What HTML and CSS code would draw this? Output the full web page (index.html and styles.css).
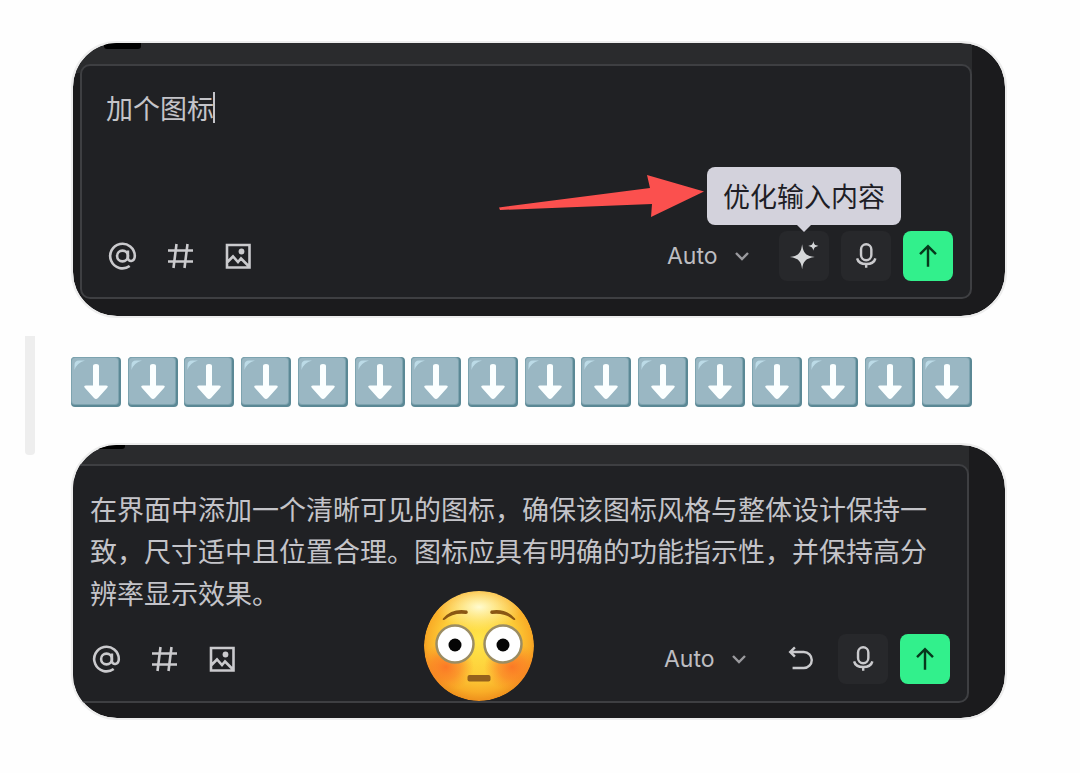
FILE: index.html
```html
<!DOCTYPE html>
<html lang="zh-CN">

<head>
  <meta charset="UTF-8">
  <meta name="viewport" content="width=device-width, initial-scale=1.0">
  <title>优化输入内容</title>
  <link rel="stylesheet" href="styles.css">
</head>

<body>
  <!-- 图标 -->
  <svg class="sprite" aria-hidden="true">
    <symbol id="icon-at" viewBox="0 0 32 32">
      <circle cx="16.500" cy="16" r="5.400" />
      <path d="M21.900 10.400v7.400c0 4.600 6.900 4.400 6.900-1.800A12.300 12.300 0 1 0 23.700 26" />
    </symbol>
    <symbol id="icon-hash" viewBox="0 0 32 32">
      <path d="M12.500 4L9.500 28M23.500 4L20.500 28M4 10.500H29M4 21.500H29" />
    </symbol>
    <symbol id="icon-image" viewBox="0 0 32 32">
      <path d="M5 5H27.500V27.500H5zM5 22.500L11 16.500L16 22L19 18.500L27 26.500" />
      <circle class="dot" cx="19.500" cy="11.500" r="2.900" />
    </symbol>
    <symbol id="icon-chevron" viewBox="0 0 14 14">
      <path d="M1 4L7 10L13 4" />
    </symbol>
    <symbol id="icon-mic" viewBox="0 0 32 32">
      <rect x="10.700" y="3.500" width="11" height="17" rx="5.500" />
      <path d="M6.500 18.500C8.500 26.500 24 26.500 26 18.500M16.200 24.500V28.500" />
    </symbol>
    <symbol id="icon-send" viewBox="0 0 32 32">
      <path d="M16 27.500V5.500M7.500 14L16 5.500L24.500 14" />
    </symbol>
    <symbol id="icon-undo" viewBox="0 0 32 32">
      <path d="M9.500 3.500L4.500 8.500L9.500 13.500M4.500 8.500H19A8.500 8.500 0 0 1 19 25.500H7" />
    </symbol>
    <symbol id="icon-sparkle" viewBox="0 0 32 32">
      <path d="M14 3.500C15.200 12.500 17.500 16 27.500 17C17.500 18.500 15.200 21.500 14 30C12.800 21.500 10.500 18.500 1 17C10.500 16 12.800 12.500 14 3.500Z" />
      <path d="M26 0C26.500 3.500 27.500 4.500 31.500 5.200C27.500 6 26.500 7 26 10.500C25.500 7 24.500 6 20.500 5.200C24.500 4.500 25.500 3.500 26 0Z" />
    </symbol>
    <symbol id="emoji-down" viewBox="0 0 50 50">
      <rect width="50" height="50" rx="4" fill="#5b8895" />
      <rect width="48" height="48" rx="4" fill="#7da3af" />
      <rect x="1" y="1" width="46" height="46" rx="3" fill="#9ab7c3" />
      <path d="M3.500 13V8Q3.500 3.500 8 3.500H14Q5.500 6 3.500 13Z" fill="#bcdbe7" />
      <path d="M22 9Q22 7 25 7Q28 7 28 9V28.500H35Q38 28.500 36 31L27 41Q25 43 23 41L14 31Q12 28.500 15 28.500H22Z" fill="#fbffff" />
    </symbol>
  </svg>

  <main class="page">
    <section class="shot">
      <form class="composer">
        <textarea class="prompt" rows="3" aria-label="提示词">加个图标</textarea>
        <span class="caret"></span>
        <div class="toolbar">
          <button type="button" class="tool" aria-label="提及"><svg class="icon"><use href="#icon-at" /></svg></button>
          <button type="button" class="tool" aria-label="标签"><svg class="icon"><use href="#icon-hash" /></svg></button>
          <button type="button" class="tool" aria-label="图片"><svg class="icon"><use href="#icon-image" /></svg></button>
          <div class="model">
            <select class="model-select" aria-label="模型">
              <option>Auto</option>
            </select>
            <svg class="chevron"><use href="#icon-chevron" /></svg>
          </div>
          <div class="tip-wrap">
            <button type="button" class="action sparkle" aria-describedby="tip"><svg class="icon"><use href="#icon-sparkle" /></svg></button>
            <div class="tooltip" id="tip" role="tooltip">优化输入内容
              <svg class="pointer" viewBox="0 0 206 44">
                <path d="M0 33.500L151 14L148 1L205 17.500L152 43L153 30L1 36Z" />
              </svg>
            </div>
          </div>
          <button type="button" class="action" aria-label="语音"><svg class="icon"><use href="#icon-mic" /></svg></button>
          <button type="button" class="action send" aria-label="发送"><svg class="icon"><use href="#icon-send" /></svg></button>
        </div>
      </form>
    </section>

    <span class="quote-bar"></span>
    <div class="arrows" role="img" aria-label="向下">
      <svg class="down"><use href="#emoji-down" /></svg>
      <svg class="down"><use href="#emoji-down" /></svg>
      <svg class="down"><use href="#emoji-down" /></svg>
      <svg class="down"><use href="#emoji-down" /></svg>
      <svg class="down"><use href="#emoji-down" /></svg>
      <svg class="down"><use href="#emoji-down" /></svg>
      <svg class="down"><use href="#emoji-down" /></svg>
      <svg class="down"><use href="#emoji-down" /></svg>
      <svg class="down"><use href="#emoji-down" /></svg>
      <svg class="down"><use href="#emoji-down" /></svg>
      <svg class="down"><use href="#emoji-down" /></svg>
      <svg class="down"><use href="#emoji-down" /></svg>
      <svg class="down"><use href="#emoji-down" /></svg>
      <svg class="down"><use href="#emoji-down" /></svg>
      <svg class="down"><use href="#emoji-down" /></svg>
      <svg class="down"><use href="#emoji-down" /></svg>
    </div>

    <section class="shot shot-after">
      <form class="composer">
        <textarea class="prompt" rows="3" aria-label="提示词">在界面中添加一个清晰可见的图标，确保该图标风格与整体设计保持一致，尺寸适中且位置合理。图标应具有明确的功能指示性，并保持高分辨率显示效果。</textarea>
        <div class="toolbar">
          <button type="button" class="tool" aria-label="提及"><svg class="icon"><use href="#icon-at" /></svg></button>
          <button type="button" class="tool" aria-label="标签"><svg class="icon"><use href="#icon-hash" /></svg></button>
          <button type="button" class="tool" aria-label="图片"><svg class="icon"><use href="#icon-image" /></svg></button>
          <div class="model">
            <select class="model-select" aria-label="模型">
              <option>Auto</option>
            </select>
            <svg class="chevron"><use href="#icon-chevron" /></svg>
          </div>
          <button type="button" class="action undo" aria-label="撤销"><svg class="icon"><use href="#icon-undo" /></svg></button>
          <button type="button" class="action" aria-label="语音"><svg class="icon"><use href="#icon-mic" /></svg></button>
          <button type="button" class="action send" aria-label="发送"><svg class="icon"><use href="#icon-send" /></svg></button>
        </div>
      </form>

      <!-- 脸红表情 -->
      <svg class="flushed" viewBox="0 0 110 112" role="img" aria-label="脸红">
        <defs>
          <radialGradient id="face" cx="50%" cy="45%" r="55%">
            <stop offset="0" stop-color="#ffe54a" />
            <stop offset="0.6" stop-color="#fdcd38" />
            <stop offset="0.85" stop-color="#f9ad27" />
            <stop offset="1" stop-color="#ee8f1c" />
          </radialGradient>
          <radialGradient id="shine">
            <stop offset="0" stop-color="#fffbd0" />
            <stop offset="1" stop-color="#fff3a0" stop-opacity="0" />
          </radialGradient>
          <radialGradient id="blush">
            <stop offset="0" stop-color="#fb7125" stop-opacity="0.9" />
            <stop offset="0.5" stop-color="#fb7a25" stop-opacity="0.6" />
            <stop offset="1" stop-color="#fb8a25" stop-opacity="0" />
          </radialGradient>
          <clipPath id="head">
            <circle cx="55" cy="56" r="55" />
          </clipPath>
        </defs>
        <g clip-path="url(#head)">
          <circle cx="55" cy="56" r="55" fill="url(#face)" />
          <ellipse cx="55" cy="17" rx="44" ry="24" fill="url(#shine)" />
          <ellipse cx="22" cy="77" rx="28" ry="24" fill="url(#blush)" />
          <ellipse cx="88" cy="77" rx="28" ry="24" fill="url(#blush)" />
        </g>
        <path d="M19 28.500Q28 18 43 20.500Q45 23.500 42 24Q29 22.500 21 29.500Q18 31 19 28.500ZM91 28.500Q82 18 67 20.500Q65 23.500 68 24Q81 22.500 89 29.500Q92 31 91 28.500Z" fill="#8a5713" />
        <circle cx="31" cy="54" r="18.500" fill="#fff" stroke="#9b8d63" stroke-width="2.500" />
        <circle cx="79" cy="54" r="18.500" fill="#fff" stroke="#9b8d63" stroke-width="2.500" />
        <circle cx="31" cy="55" r="6.500" fill="#050505" />
        <circle cx="79" cy="55" r="6.500" fill="#050505" />
        <rect x="43.500" y="85" width="23" height="6.500" rx="2" fill="#94611d" />
      </svg>
    </section>
  </main>
</body>

</html>
```

FILE: styles.css
```css
* {
  box-sizing: border-box;
}

body {
  margin: 0;
  background: #fefefe;
  font-family: "Inter", "Noto Sans CJK SC", sans-serif;
}

.sprite {
  position: absolute;
  width: 0;
  height: 0;
}

.page {
  display: grid;
  grid-template-columns: 10px minmax(0, 1fr);
  column-gap: 38px;
  padding: 43px 75px 43px 25px;
}

.shot {
  position: relative;
  grid-column: 2;
  padding: 21px 33px 17px 7px;
  border-radius: 44px;
  overflow: hidden;
  background: linear-gradient(#2a2b2d, #2a2b2d) 0 0 / calc(100% - 33px) 30px no-repeat, #1b1b1d;
  outline: 2px solid #ededed;
}

/* 左上角黑块 */
.shot::before {
  content: "";
  position: absolute;
  top: 0;
  left: 31px;
  width: 37px;
  height: 6px;
  background: #000;
  border-radius: 0 0 3px 3px;
}

.shot-after {
  padding: 19px 36px 15px 0;
  background-size: calc(100% - 36px) 30px, auto;
}

.shot-after::before {
  left: 15px;
  height: 4px;
}

.composer {
  position: relative;
  padding: 21px 17px 16px 24px;
  border: 2px solid #3e3f42;
  border-radius: 10px;
  background: #202124;
}

.shot-after .composer {
  margin-left: -9px;
  padding-top: 22px;
  padding-bottom: 17px;
}

.prompt {
  display: block;
  width: 100%;
  padding: 0;
  border: none;
  outline: none;
  resize: none;
  overflow: hidden;
  background: transparent;
  color: #c4c4c9;
  font-family: "Noto Sans CJK SC", sans-serif;
  font-size: 27px;
  line-height: 42px;
}

.caret {
  position: absolute;
  top: 26px;
  left: 131px;
  width: 2px;
  height: 31px;
  background: #c4c4c9;
}

.toolbar {
  display: flex;
  align-items: center;
  gap: 12px;
  margin-top: 18px;
}

.shot-after .toolbar {
  margin-top: 20px;
}

button {
  display: flex;
  align-items: center;
  justify-content: center;
  padding: 0;
  border: none;
  background: none;
  color: #cacacd;
  cursor: pointer;
}

.tool {
  margin-right: 14px;
}

.icon {
  width: 32px;
  height: 32px;
  fill: none;
  stroke: currentColor;
  stroke-width: 2.6;
}

.dot {
  fill: currentColor;
  stroke: none;
}

.model {
  display: flex;
  align-items: center;
  margin-left: auto;
  margin-right: 18px;
}

.model-select {
  appearance: none;
  width: 82px;
  margin-right: -14px;
  padding: 0;
  border: none;
  outline: none;
  background: transparent;
  color: #bdbdc1;
  font-family: "Inter", sans-serif;
  font-size: 23px;
  line-height: 30px;
}

.chevron {
  width: 14px;
  height: 14px;
  fill: none;
  stroke: #9a9a9e;
  stroke-width: 2.4;
  pointer-events: none;
}

.action {
  width: 50px;
  height: 50px;
  border-radius: 8px;
  background: #27282b;
}

.action .icon {
  width: 30px;
  height: 30px;
}

.undo {
  background: none;
}

.sparkle .icon {
  fill: #d5d7d9;
  stroke: none;
}

.send {
  background: #32f08c;
  color: #06381c;
}

.tip-wrap {
  position: relative;
}

.tooltip {
  position: absolute;
  bottom: 56px;
  left: 50%;
  transform: translateX(-50%);
  padding: 8px 16px;
  border-radius: 8px;
  background: #d3d2dc;
  color: #1e1e26;
  font-family: "Noto Sans CJK SC", sans-serif;
  font-size: 27px;
  line-height: 42px;
  white-space: nowrap;
}

.tooltip::after {
  content: "";
  position: absolute;
  top: 100%;
  left: 50%;
  margin-left: -7px;
  border: 7px solid transparent;
  border-top-color: #d3d2dc;
  border-bottom: none;
}

.pointer {
  position: absolute;
  top: 7px;
  right: calc(100% + 2px);
  width: 206px;
  height: 44px;
  fill: #fb504e;
}

.quote-bar {
  margin: 20px 0 -10px;
  border-radius: 0 0 4px 4px;
  background: #eee;
}

.arrows {
  display: flex;
  justify-content: space-between;
  margin: 41px 33px 38px -2px;
}

.down {
  width: 50px;
  height: 50px;
}

.flushed {
  position: absolute;
  top: 145px;
  left: 351px;
  width: 110px;
  height: 112px;
}
```
